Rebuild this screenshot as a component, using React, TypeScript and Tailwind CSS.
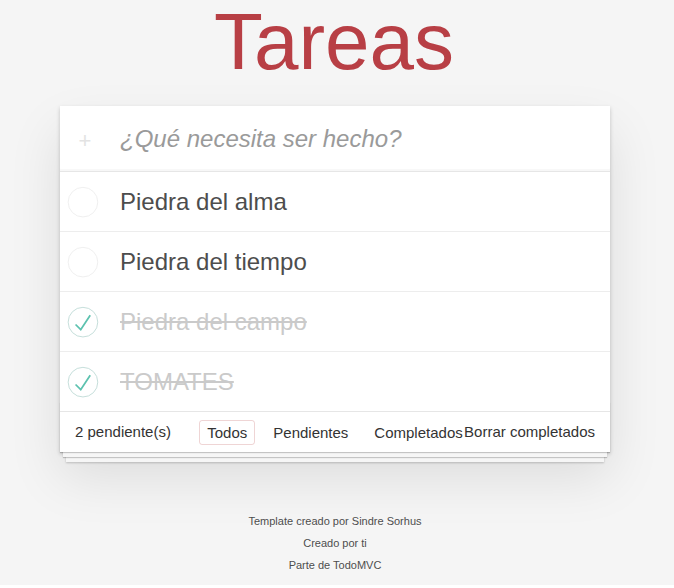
import React from "react";

type Todo = { title: string; done: boolean };

const todos: Todo[] = [
  { title: "Piedra del alma", done: false },
  { title: "Piedra del tiempo", done: false },
  { title: "Piedra del campo", done: true },
  { title: "TOMATES", done: true },
];

function Toggle({ done }: { done: boolean }) {
  return (
    <svg width="40" height="40" viewBox="-10 -18 100 135" className="shrink-0">
      <circle cx="50" cy="50" r="50" fill="none" stroke={done ? "#bddad5" : "#ededed"} strokeWidth="3" />
      {done && <path fill="#5dc2af" d="M72 25L42 71 27 56l-4 4 20 20 34-52z" />}
    </svg>
  );
}

export default function App() {
  return (
    <div
      className="min-h-[588px] bg-[#f5f5f5] text-[#4d4d4d]"
      style={{ fontFamily: '"Liberation Sans", Arial, Helvetica, sans-serif' }}
    >
      <div className="w-[550px] ml-[60px]">
        <h1 className="-mt-[3px] text-center text-[80px] leading-[90px] font-normal text-[#b83f45] -ml-[2px]">
          Tareas
        </h1>
        <section className="mt-[19px] bg-white shadow-[0_2px_4px_0_rgba(0,0,0,0.2),0_25px_50px_0_rgba(0,0,0,0.1)]">
          <div className="h-[65px] flex items-center shadow-[inset_0_-2px_1px_rgba(0,0,0,0.03)]">
            <div className="w-[50px] flex justify-center text-[22px] text-[#e3e3e3] pt-[4px]">+</div>
            <div className="pl-[10px] text-[24px] italic text-[#9a9a9a]">¿Qué necesita ser hecho?</div>
          </div>
          <ul className="border-t border-[#e6e6e6]">
            {todos.map((t, i) => (
              <li
                key={i}
                className={
                  "flex items-center " +
                  (i < todos.length - 1 ? "h-[60px] border-b border-[#ededed]" : "h-[59px]")
                }
              >
                <div className="w-[60px] flex items-center">
                  <Toggle done={t.done} />
                </div>
                <span
                  className={
                    "text-[24px] leading-[29px] " +
                    (t.done ? "text-[#cacaca] line-through" : "text-[#4d4d4d]")
                  }
                >
                  {t.title}
                </span>
              </li>
            ))}
          </ul>
          <footer className="relative h-[41px] border-t border-[#e6e6e6] px-[15px] text-[15px] text-[#333]">
            <div className="absolute inset-x-0 bottom-0 h-[50px] overflow-hidden shadow-[0_1px_1px_rgba(0,0,0,0.2),0_8px_0_-3px_#f6f6f6,0_9px_1px_-3px_rgba(0,0,0,0.2),0_16px_0_-6px_#f6f6f6,0_17px_2px_-6px_rgba(0,0,0,0.2)]" />
            <div className="relative h-full flex items-center justify-between bg-white">
              <span>2 pendiente(s)</span>
              <span>Borrar completados</span>
            </div>
            <ul className="absolute inset-x-0 top-0 h-full flex items-center justify-center gap-[4px]">
              <li className="m-[3px] px-[7px] py-[3px] border border-[rgba(175,47,47,0.2)] rounded-[3px] leading-[17px]">
                Todos
              </li>
              <li className="m-[3px] px-[7px] py-[3px] border border-transparent rounded-[3px] leading-[17px]">
                Pendientes
              </li>
              <li className="m-[3px] px-[7px] py-[3px] border border-transparent rounded-[3px] leading-[17px]">
                Completados
              </li>
            </ul>
          </footer>
        </section>
        <div className="mt-[64px] flex flex-col items-center gap-[11px] text-[11px] leading-[11px] text-[#4d4d4d] [text-shadow:0_1px_0_rgba(255,255,255,0.5)]">
          <p>Template creado por Sindre Sorhus</p>
          <p>Creado por ti</p>
          <p>Parte de TodoMVC</p>
        </div>
      </div>
    </div>
  );
}
